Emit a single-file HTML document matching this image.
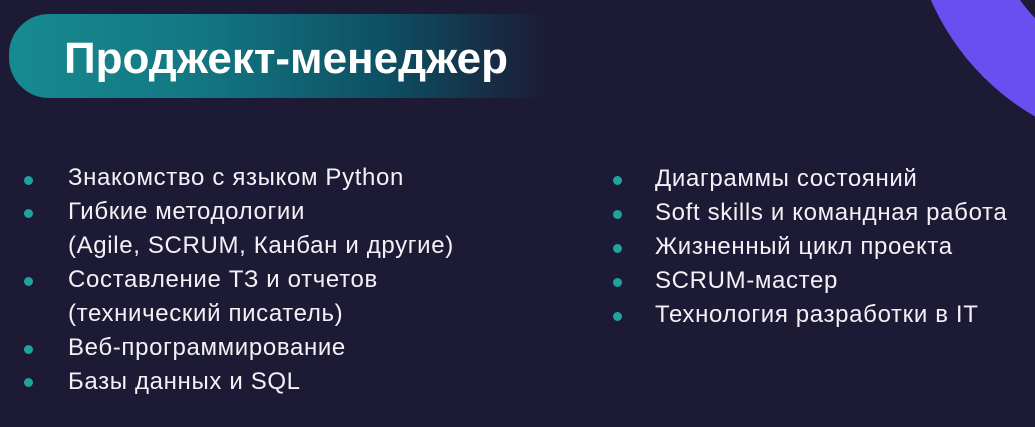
<!DOCTYPE html><html><head><style>
body{margin:0;width:1035px;height:427px;background:#1c1a34;overflow:hidden;position:relative;font-family:"Liberation Sans",sans-serif;color:#f2f2f6}
.pill{position:absolute;left:9px;top:14px;width:540px;height:84px;border-radius:40px 0 0 40px;background:linear-gradient(90deg,#178a90 0%,#137782 35%,#0e4f63 70%,rgba(28,26,52,0) 100%)}
.t{position:absolute;left:64px;top:34px;font-size:44px;font-weight:bold;color:#fff}
.arc{position:absolute;left:910px;top:-350px;width:500px;height:500px;border-radius:50%;background:#6a4ff0}
.arc2{position:absolute;left:988px;top:-272px;width:344px;height:344px;border-radius:50%;background:#1c1a34}
.l{position:absolute;font-size:24px;line-height:34px;letter-spacing:0.65px}
.b{position:absolute;width:9px;height:9px;border-radius:50%;background:#1fa39c}
</style></head><body>
<div class="arc"></div><div class="arc2"></div>
<div class="pill"></div>
<div class="t">Проджект-менеджер</div>
<div class="l" style="left:68px;top:161px">
<div>Знакомство с языком Python</div>
<div>Гибкие методологии</div>
<div>(Agile, SCRUM, Канбан и другие)</div>
<div>Составление ТЗ и отчетов</div>
<div>(технический писатель)</div>
<div>Веб-программирование</div>
<div>Базы данных и SQL</div>
</div>
<div class="b" style="left:24px;top:176px"></div>
<div class="b" style="left:24px;top:209px"></div>
<div class="b" style="left:24px;top:277px"></div>
<div class="b" style="left:24px;top:345px"></div>
<div class="b" style="left:24px;top:378px"></div>
<div class="l" style="left:655px;top:162px">
<div>Диаграммы состояний</div>
<div>Soft skills и командная работа</div>
<div>Жизненный цикл проекта</div>
<div>SCRUM-мастер</div>
<div>Технология разработки в IT</div>
</div>
<div class="b" style="left:613px;top:176px"></div>
<div class="b" style="left:613px;top:210px"></div>
<div class="b" style="left:613px;top:244px"></div>
<div class="b" style="left:613px;top:278px"></div>
<div class="b" style="left:613px;top:312px"></div>
</body></html>
